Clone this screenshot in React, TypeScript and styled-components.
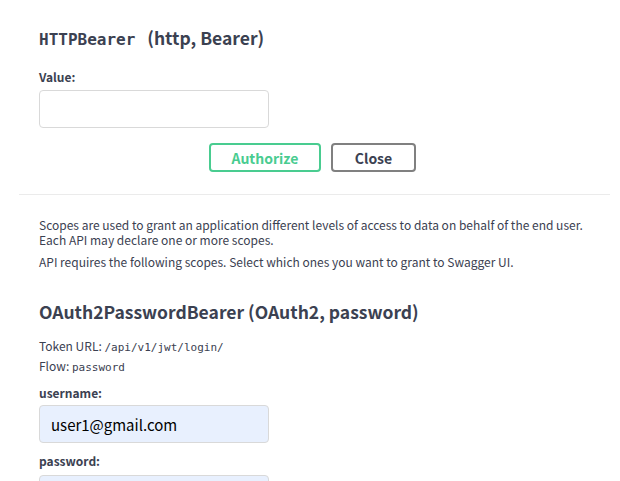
import React from "react";
import styled, { createGlobalStyle } from "styled-components";

const GlobalStyle = createGlobalStyle`
  html, body {
    margin: 0;
    padding: 0;
    background: #ffffff;
  }
  body {
    font-family: "Noto Sans CJK KR", "Noto Sans", sans-serif;
    color: #3b4151;
  }
`;

const Modal = styled.div`
  width: 620px;
  height: 481px;
  overflow: hidden;
  box-sizing: border-box;
  padding: 28px 10px 0 19px;
`;

const AuthBlock = styled.div`
  display: flex;
  flex-direction: column;
  align-items: flex-start;
  padding: 0 20px;
`;

const Title = styled.h4<{ $gap?: number }>`
  margin: ${(p) => p.$gap ?? 0}px 0 0;
  font-size: 17.5px;
  line-height: 20px;
  font-weight: 700;
  color: #3b4151;
  white-space: nowrap;
`;

const TitleCode = styled.code`
  font-family: "DejaVu Sans Mono", "Liberation Mono", monospace;
  font-size: 16px;
  font-weight: 700;
  margin-right: 8px;
`;

const Label = styled.label<{ $gap: number }>`
  display: block;
  margin-top: ${(p) => p.$gap}px;
  font-size: 12px;
  line-height: 15px;
  font-weight: 700;
  color: #3b4151;
`;

const Input = styled.input<{ $filled?: boolean; $gap: number }>`
  display: block;
  box-sizing: border-box;
  width: 230px;
  height: 38px;
  margin-top: ${(p) => p.$gap}px;
  padding: 0 11px;
  border: 1px solid #d9d9d9;
  border-radius: 4px;
  background: ${(p) => (p.$filled ? "#e8f0fe" : "#ffffff")};
  font-family: "Noto Sans CJK KR", "Noto Sans", sans-serif;
  font-size: 15px;
  color: #000000;
  outline: none;
`;

const ButtonRow = styled.div`
  display: flex;
  justify-content: center;
  gap: 10px;
  margin-top: 15px;
  padding-right: 4px;
`;

const Button = styled.button<{ $primary?: boolean }>`
  box-sizing: border-box;
  height: 29px;
  width: ${(p) => (p.$primary ? 112 : 85)}px;
  padding: 0;
  border: 2px solid ${(p) => (p.$primary ? "#49cc90" : "#808080")};
  border-radius: 4px;
  background: transparent;
  font-family: "Noto Sans CJK KR", "Noto Sans", sans-serif;
  font-size: 14px;
  font-weight: 700;
  color: ${(p) => (p.$primary ? "#49cc90" : "#3b4151")};
  cursor: pointer;
`;

const Divider = styled.hr`
  margin: 22px 0 0;
  border: 0;
  border-top: 1px solid #ebebeb;
  height: 0;
`;

const Text = styled.p<{ $gap: number }>`
  margin: ${(p) => p.$gap}px 0 0;
  font-size: 12px;
  line-height: 15px;
  color: #3b4151;
`;

const Code = styled.code`
  font-family: "DejaVu Sans Mono", "Liberation Mono", monospace;
  font-size: 11px;
  line-height: 1;
  color: #3b4151;
`;

export default function App() {
  return (
    <>
      <GlobalStyle />
      <Modal>
        <AuthBlock>
          <Title>
            <TitleCode>HTTPBearer</TitleCode> (http, Bearer)
          </Title>
          <Label $gap={19}>Value:</Label>
          <Input $gap={6} type="text" />
        </AuthBlock>
        <ButtonRow>
          <Button $primary>Authorize</Button>
          <Button>Close</Button>
        </ButtonRow>
        <Divider />
        <AuthBlock>
          <Text $gap={22}>
            Scopes are used to grant an application different levels of access to data on behalf of the end user.
            <br />
            Each API may declare one or more scopes.
          </Text>
          <Text $gap={7}>API requires the following scopes. Select which ones you want to grant to Swagger UI.</Text>
          <Title $gap={33}>OAuth2PasswordBearer (OAuth2, password)</Title>
          <Text $gap={16}>
            Token URL: <Code>/api/v1/jwt/login/</Code>
          </Text>
          <Text $gap={5}>
            Flow: <Code>password</Code>
          </Text>
          <Label $gap={12}>username:</Label>
          <Input $gap={5} $filled type="text" defaultValue="user1@gmail.com" />
          <Label $gap={10}>password:</Label>
          <Input $gap={7} $filled type="password" />
        </AuthBlock>
      </Modal>
    </>
  );
}
